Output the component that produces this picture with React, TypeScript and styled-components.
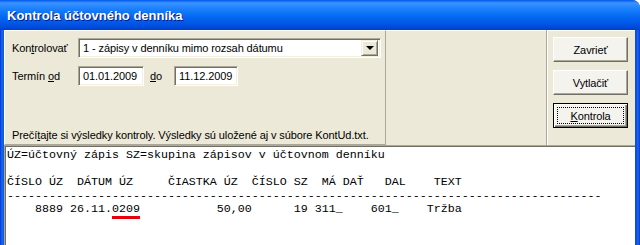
import styled, { createGlobalStyle } from 'styled-components'

const GlobalStyle = createGlobalStyle`
	html, body {
		margin: 0;
		padding: 0;
		background: #fff;
	}
	body {
		width: 640px;
		height: 245px;
		overflow: hidden;
	}
`

const Window = styled.div`
	width: 640px;
	height: 245px;
	display: flex;
	flex-direction: column;
	background: linear-gradient(to right, #0831D9 0, #166AEE 2px, #0855DD 4px, #0855DD 635px, #0A4AD8 636px, #166AEE 638px, #0831D9 640px);
	border-top-right-radius: 8px;
	overflow: hidden;
`

const TitleBar = styled.div`
	height: 30px;
	flex: none;
	display: flex;
	align-items: center;
	padding-left: 7px;
	background: linear-gradient(to bottom, #0058EE 0%, #3D93FF 10%, #2A89FF 20%, #0F77F8 40%, #0465F0 60%, #0055E5 80%, #0048D8 92%, #003FC8 100%);
	color: #fff;
	font: bold 13px "Liberation Sans", Arial, sans-serif;
	text-shadow: 1px 1px #0A1883;
`

const Client = styled.div`
	flex: 1;
	min-height: 0;
	margin: 0 5px 0 4px;
	background: #ECE9D8;
	display: flex;
	flex-direction: column;
	font: 11px "Liberation Sans", Arial, sans-serif;
	letter-spacing: -0.1px;
	color: #000;
`

const TopArea = styled.div`
	height: 115px;
	flex: none;
	display: flex;
`

const ParamPanel = styled.div`
	width: 382px;
	box-sizing: border-box;
	border-top: 1px solid #fff;
	border-left: 1px solid #fff;
	border-right: 1px solid #ACA899;
	border-bottom: 1px solid #ACA899;
	padding: 7px 0 0 7px;
	display: flex;
	flex-direction: column;
	gap: 8px;
`

const Spacer = styled.div`
	flex: 1;
	border-top: 1px solid #fff;
`

const ActionPanel = styled.div`
	width: 89px;
	box-sizing: border-box;
	border-left: 1px solid #ACA899;
	box-shadow: inset 1px 1px #fff;
	padding: 7px 0 0 6px;
	display: flex;
	flex-direction: column;
	gap: 8px;
`

const Row = styled.div`
	display: flex;
	align-items: center;
	height: 20px;
`

const Label = styled.div<{ $width?: number }>`
	width: ${p => (p.$width ? `${p.$width}px` : 'auto')};
	flex: none;
	white-space: nowrap;
`

const Key = styled.span`
	text-decoration: underline;
	text-underline-offset: 1px;
`

const Field = styled.div<{ $width: number }>`
	width: ${p => p.$width}px;
	height: 20px;
	box-sizing: border-box;
	background: #fff;
	border: 1px solid;
	border-color: #ACA899 #fff #fff #ACA899;
	box-shadow: inset 1px 1px #716F64, inset -1px -1px #F1EFE2;
	display: flex;
	align-items: center;
	padding-left: 4px;
	white-space: nowrap;
`

const Combo = styled(Field)`
	justify-content: space-between;
	padding-right: 2px;
`

const DropButton = styled.div`
	width: 17px;
	height: 16px;
	box-sizing: border-box;
	background: #ECE9D8;
	border: 1px solid;
	border-color: #F1EFE2 #716F64 #716F64 #F1EFE2;
	box-shadow: inset 1px 1px #fff, inset -1px -1px #ACA899;
	display: flex;
	align-items: center;
	justify-content: center;
`

const Arrow = styled.div`
	width: 0;
	height: 0;
	border-left: 4px solid transparent;
	border-right: 4px solid transparent;
	border-top: 4px solid #000;
`

const DateLabel = styled.div`
	margin: 0 0 0 6px;
	width: 24px;
`

const Info = styled.div`
	margin-top: auto;
	line-height: 13px;
	padding-bottom: 2px;
	white-space: nowrap;
`

const Button = styled.div<{ $default?: boolean }>`
	width: 75px;
	height: 25px;
	box-sizing: border-box;
	background: #F4F3EE;
	border: 1px solid;
	border-color: ${p => (p.$default ? '#000' : '#fff #716F64 #716F64 #fff')};
	box-shadow: ${p =>
		p.$default
			? 'inset 1px 1px #fff, inset -1px -1px #716F64, inset -2px -2px #ACA899'
			: 'inset -1px -1px #ACA899'};
	display: flex;
	align-items: center;
	justify-content: center;
	position: relative;
`

const Focus = styled.span`
	position: absolute;
	inset: 3px;
	border: 1px dotted #000;
`

const Output = styled.pre`
	flex: 1;
	margin: 0;
	background: #fff;
	border-top: 1px solid #ACA899;
	border-left: 1px solid #ACA899;
	box-shadow: inset 1px 1px #716F64;
	padding: 3px 0 0 2px;
	font: 11.67px "Liberation Mono", "Courier New", monospace;
	letter-spacing: 0;
	line-height: 13.5px;
	color: #000;
	overflow: hidden;
`

const Mark = styled.span`
	border-bottom: 3px solid #E8000B;
`

const dashes = '-'.repeat(85)

const App = () => {
	return (
		<>
			<GlobalStyle />
			<Window>
				<TitleBar>Kontrola účtovného denníka</TitleBar>
				<Client>
					<TopArea>
						<ParamPanel>
							<Row>
								<Label $width={66}>
									Kon<Key>t</Key>rolovať
								</Label>
								<Combo $width={303}>
									1 - zápisy v denníku mimo rozsah dátumu
									<DropButton>
										<Arrow />
									</DropButton>
								</Combo>
							</Row>
							<Row>
								<Label $width={66}>
									Termín <Key>o</Key>d
								</Label>
								<Field $width={66}>01.01.2009</Field>
								<DateLabel>
									<Key>d</Key>o
								</DateLabel>
								<Field $width={64}>11.12.2009</Field>
							</Row>
							<Info>
								Prečí<Key>t</Key>ajte si výsledky kontroly. Výsledky sú uložené aj v súbore KontUd.txt.
							</Info>
						</ParamPanel>
						<Spacer />
						<ActionPanel>
							<Button>Zavrieť</Button>
							<Button>Vytlačiť</Button>
							<Button $default>
								<Focus />
								<span>
									<Key>K</Key>ontrola
								</span>
							</Button>
						</ActionPanel>
					</TopArea>
					<Output>
						{'ÚZ=účtovný zápis SZ=skupina zápisov v účtovnom denníku\n'}
						{'\n'}
						{'ČÍSLO ÚZ  DÁTUM ÚZ     ČIASTKA ÚZ  ČÍSLO SZ  MÁ DAŤ   DAL    TEXT\n'}
						{dashes + '\n'}
						{'    8889 26.11.'}
						<Mark>0209</Mark>
						{'           50,00      19 311_    601_    Tržba'}
					</Output>
				</Client>
			</Window>
		</>
	)
}

export default App
